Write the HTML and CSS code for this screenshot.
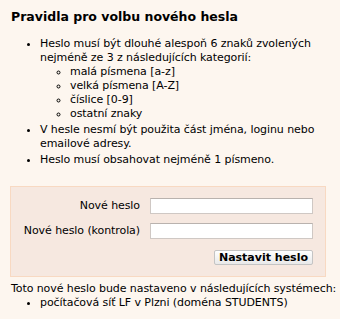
FILE: index.html
```html
<!DOCTYPE html>
<html lang="cs">
<head>
<meta charset="utf-8">
<title>Pravidla pro volbu nového hesla</title>
<link rel="stylesheet" href="styles.css">
</head>
<body>
<div class="page">
  <h1 class="title">Pravidla pro volbu nového hesla</h1>
  <ul class="rules">
    <li>Heslo musí být dlouhé alespoň 6 znaků zvolených nejméně ze 3 z následujících kategorií:
      <ul class="sub">
        <li>malá písmena [a-z]</li>
        <li>velká písmena [A-Z]</li>
        <li>číslice [0-9]</li>
        <li>ostatní znaky</li>
      </ul>
    </li>
    <li>V hesle nesmí být použita část jména, loginu nebo emailové adresy.</li>
    <li>Heslo musí obsahovat nejméně 1 písmeno.</li>
  </ul>
  <form class="pwbox" onsubmit="return false">
    <label class="lbl" for="p1">Nové heslo</label>
    <input class="field" id="p1" type="password">
    <label class="lbl" for="p2">Nové heslo (kontrola)</label>
    <input class="field" id="p2" type="password">
    <button class="btn" type="submit">Nastavit heslo</button>
  </form>
  <p class="note">Toto nové heslo bude nastaveno v následujících systémech:</p>
  <ul class="systems">
    <li>počítačová síť LF v Plzni (doména STUDENTS)</li>
  </ul>
</div>
</body>
</html>
```
FILE: styles.css
```css
html, body {
  margin: 0;
  padding: 0;
  background: #fdf6ef;
}
body {
  font-family: "DejaVu Sans", Verdana, sans-serif;
  font-size: 11px;
  line-height: 14px;
  letter-spacing: -0.08px;
  color: #000;
}
.page {
  padding: 8px 0 0 11px;
}
.title {
  margin: 0;
  font-size: 12.5px;
  line-height: 17px;
  font-weight: bold;
  letter-spacing: 0;
}
.rules {
  margin: 12px 0 0 0;
  padding: 0 0 0 29px;
  list-style: disc;
}
.rules > li + li {
  margin-top: 2px;
}
.sub {
  margin: 0;
  padding: 0 0 0 30px;
  list-style: circle;
}
.pwbox {
  display: grid;
  grid-template-columns: 1fr 163px;
  column-gap: 10px;
  row-gap: 9px;
  align-items: center;
  width: 291px;
  margin: 19px 0 0 -1px;
  padding: 11px 12px 11px 11px;
  background: #f6e8e0;
  border: 1px solid #f8d9c2;
}
.lbl {
  text-align: right;
  white-space: nowrap;
}
.field {
  box-sizing: border-box;
  width: 163px;
  height: 16px;
  margin: 0;
  padding: 0 2px;
  background: #fff;
  border: 1px solid #cfc8c4;
  border-top-color: #b9b2ae;
  font: inherit;
}
.btn {
  grid-column: 2;
  justify-self: end;
  box-sizing: border-box;
  height: 15px;
  margin: 2px 0 0 0;
  padding: 0 4px;
  font-family: inherit;
  font-size: 11px;
  font-weight: bold;
  line-height: 13px;
  color: #000;
  background: linear-gradient(#ffffff, #e9e9e9);
  border: 1px solid #c4c4c4;
  border-radius: 2px;
}
.note {
  margin: 5px 0 0 0;
  white-space: nowrap;
}
.systems {
  margin: 0;
  padding: 0 0 0 29px;
  list-style: disc;
}
```
